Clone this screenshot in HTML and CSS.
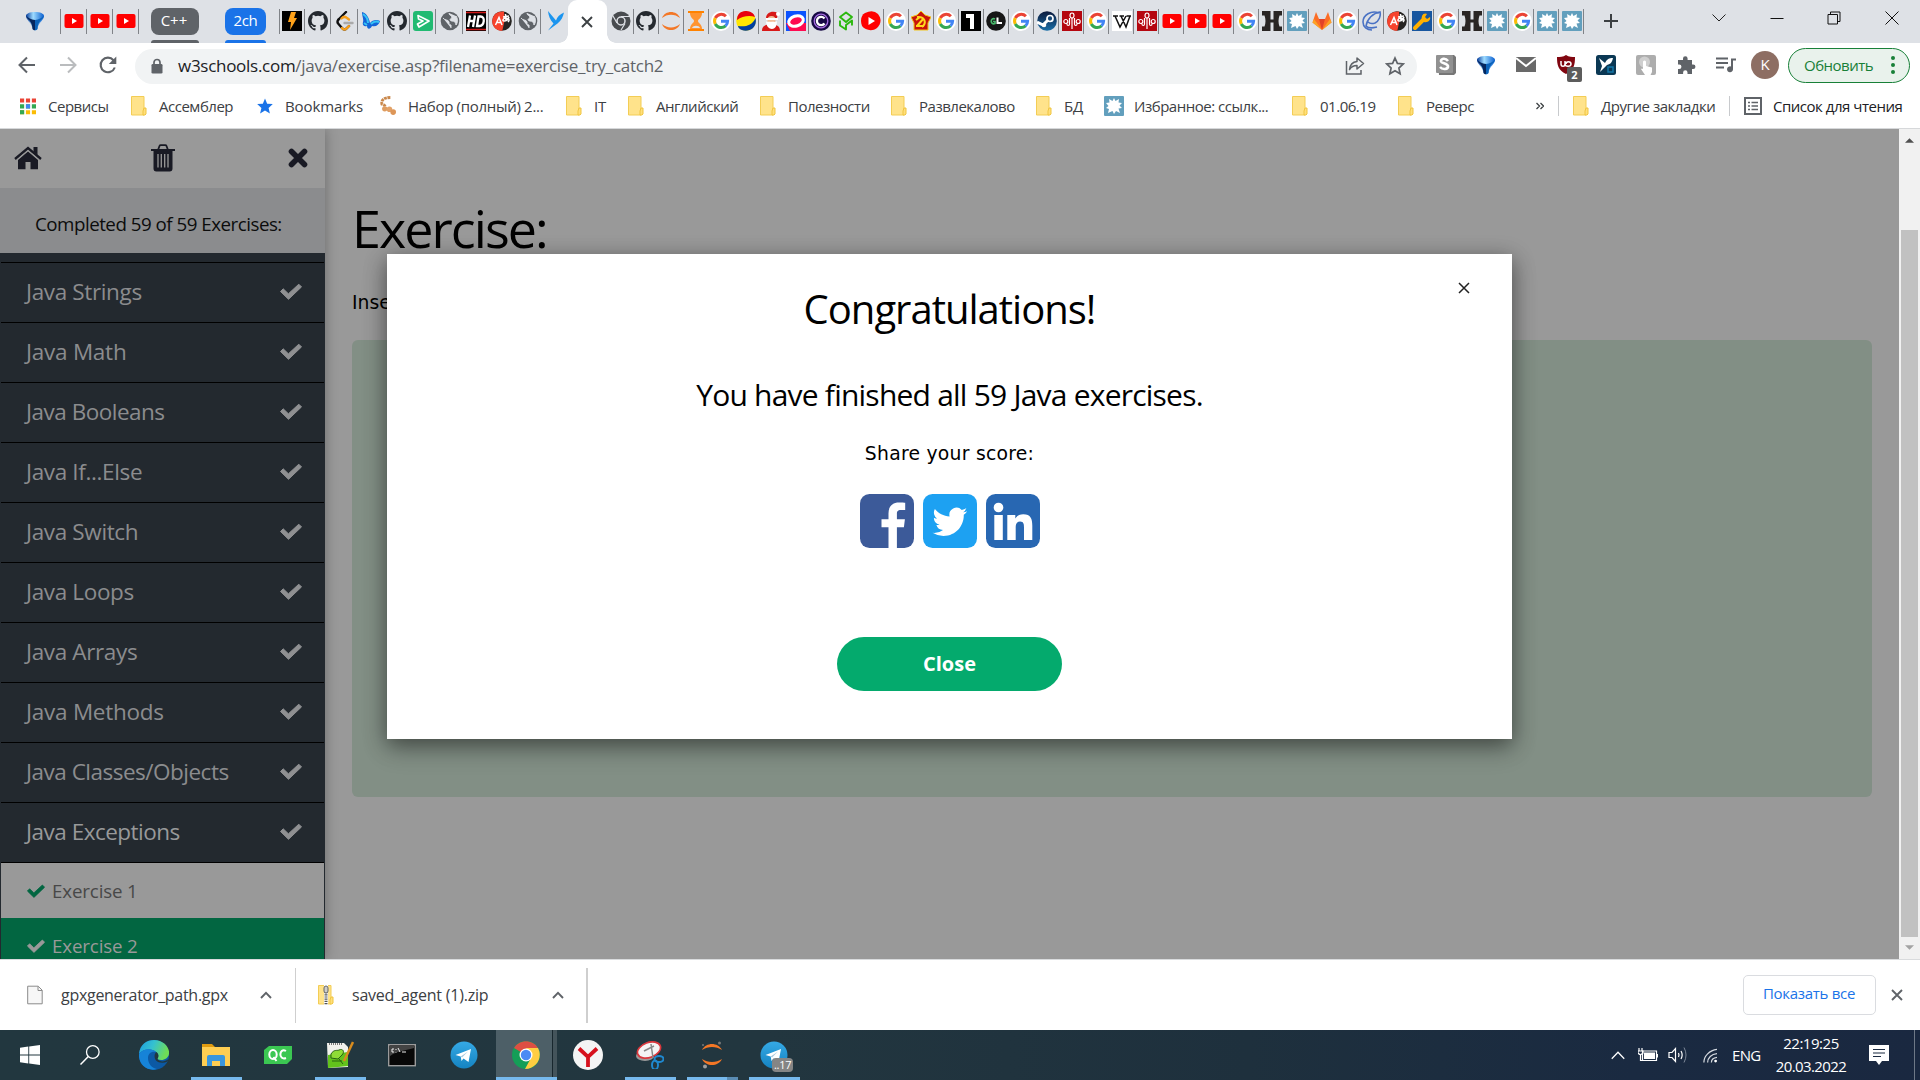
FILE: index.html
```html
<!DOCTYPE html>
<html lang="ru">
<head>
<meta charset="utf-8">
<title>Exercise</title>
<link rel="stylesheet" href="styles.css">
</head>
<body>
<svg class="defs" aria-hidden="true">
  <defs>
    <linearGradient id="blueDrop" x1="0" x2="1"><stop offset="0" stop-color="#063c9c"/><stop offset=".4" stop-color="#9fdcff"/><stop offset="1" stop-color="#0a5fd0"/></linearGradient>
    <linearGradient id="edgeTop" x1="0" y1="0" x2="1" y2=".3"><stop offset="0" stop-color="#1b9de2"/><stop offset=".5" stop-color="#35c1d0"/><stop offset="1" stop-color="#6fdd56"/></linearGradient>
    <linearGradient id="tg" x2="0" y2="1"><stop offset="0" stop-color="#35a9e5"/><stop offset="1" stop-color="#1583c1"/></linearGradient>
    <linearGradient id="steamBg" x2="0" y2="1"><stop offset="0" stop-color="#0d1a3c"/><stop offset="1" stop-color="#1a6fa8"/></linearGradient>
    <symbol id="drop" viewBox="0 0 20 20"><path d="M10 1C5 1 1 2.500 1 5c0 4 5.500 6 6.500 13 1 1.700 4 1.700 5 0C13.500 11 19 9 19 5c0-2.500-4-4-9-4z" fill="url(#blueDrop)"/><path d="M1.200 4.500C2 9 7 9 7.500 18c.5 1 1.500 1.300 2.500 1.300V9C6 8.500 3 7 1.200 4.500z" fill="#04265e"/><path d="M10 9c4-.5 7-2 8.800-4.500C18 9 13 9 12.500 18c-.5 1-1.500 1.300-2.500 1.300z" fill="#0b62b8"/></symbol>
    <symbol id="yt" viewBox="0 0 20 20"><rect x=".5" y="3" width="19" height="14" rx="2" fill="#f00"/><path d="M8 7l5 3-5 3z" fill="#fff"/></symbol>
    <symbol id="bolt" viewBox="0 0 20 20"><path fill="#000" d="M0 0h20v20H0z"/><path d="M9 1h5l-2 6h3L8 19l1-8H6z" fill="#ffa21a"/></symbol>
    <symbol id="gh" viewBox="0 0 16 16"><path fill="#24292f" d="M8 0C3.58 0 0 3.58 0 8c0 3.54 2.29 6.53 5.47 7.59.4.07.55-.17.55-.38 0-.19-.01-.82-.01-1.49-2.01.37-2.53-.49-2.69-.94-.09-.23-.48-.94-.82-1.13-.28-.15-.68-.52-.01-.53.63-.01 1.08.58 1.23.82.72 1.21 1.87.87 2.33.66.07-.52.28-.87.51-1.07-1.78-.2-3.64-.89-3.64-3.95 0-.87.31-1.59.82-2.15-.08-.2-.36-1.02.08-2.12 0 0 .67-.21 2.2.82a7.6 7.6 0 014 0c1.53-1.04 2.2-.82 2.2-.82.44 1.1.16 1.92.08 2.12.51.56.82 1.27.82 2.15 0 3.07-1.87 3.75-3.65 3.95.29.25.54.73.54 1.48 0 1.07-.01 1.93-.01 2.2 0 .21.15.46.55.38A8.01 8.01 0 0016 8c0-4.42-3.58-8-8-8z"/></symbol>
    <symbol id="leet" viewBox="0 0 20 20"><g fill="none" stroke-width="2.4" stroke-linecap="round"><path d="M11 1L3.500 8.500" stroke="#111"/><path d="M3.500 8.500q-2 2.500 0 4.500l3.500 4q2.500 3 5 0l2-2" stroke="#111"/><path d="M7 17q2.500 3 5 0l2-2M6.500 7.500q3-3 5.500-.5l2 1.500" stroke="#f9a01b"/><path d="M9.500 12h8" stroke="#aaa"/></g></symbol>
    <symbol id="butterfly" viewBox="0 0 20 20"><path d="M1 1c4 1 7 5 8 11 2-3 7-4 10-2-1 4-4 6-8 5-2 4-5 3-5 0-3 1-5-1-4-4C3 9 1 5 1 1z" fill="#1464d8"/><path d="M2 3c3 2 5 5 5 9M10 13c2-2 5-3 8-2M3 12l3 2" stroke="#35c4f5" stroke-width="2" fill="none"/></symbol>
    <symbol id="greenplay" viewBox="0 0 20 20"><rect width="20" height="20" rx="3" fill="#21ba72"/><path d="M5 4.500L16 10 6 16l-1.500-3L10 10 5.500 8z" fill="none" stroke="#fff" stroke-width="1.700" stroke-linejoin="round"/></symbol>
    <symbol id="globe" viewBox="0 0 20 20"><circle cx="10" cy="10" r="9.300" fill="#5f6368"/><path d="M3 7c2 3 5 1 6 4 0 2 0 3 2 3v3M9 2c0 3 3 2 3 5-3 1-2 3 0 3s4 1 4 4c2-3 2-6 0-9" fill="#dee1e6" stroke="#dee1e6"/></symbol>
    <symbol id="hd" viewBox="0 0 20 20"><path d="M0 0h20v20H0z"/><path d="M0 1.500h20M0 18.500h20" stroke="#d01818" stroke-width="1.400"/><g stroke="#fff" stroke-width="2.300" fill="none"><path d="M4 4.500L2 16M9 4.500L7 16M3 10h5M12.500 5.500L11 15h2.500c5-.5 6-9.500 1-9.500z"/></g></symbol>
    <symbol id="trans" viewBox="0 0 20 20"><circle cx="10" cy="10" r="9.800" fill="#262422"/><path d="M12 .4C3 0-.5 6 .3 12c1 5 5 8 10 7.800L12.500 10z" fill="#f7432d"/><path d="M3.500 14L7 6.500l3 7.500M5 11.500h4M11 6l6-1M13.500 3l.5 7M17 6c-1 3-3 4-5 4s-1-3 2-3 4 2 2 4" stroke="#fff" stroke-width="1.500" fill="none"/></symbol>
    <symbol id="bird" viewBox="0 0 20 20"><path d="M3 0l8 9.500C12 6 15 3 19 1.500c-1 4-2.500 8-6.500 11L3 19.500l5.500-7C5 9 3.500 5 3 0z" fill="#1c95ef"/></symbol>
    <symbol id="chromeGrey" viewBox="0 0 20 20"><circle cx="10" cy="10" r="9.500" fill="#484b4f"/><circle cx="10" cy="10" r="4" fill="#484b4f" stroke="#dee1e6" stroke-width="1.500"/><path d="M10 5.500h9M6 12L2 5M14 12.500L10 19" stroke="#dee1e6" stroke-width="1.200"/></symbol>
    <symbol id="jup" viewBox="0 0 20 20"><path d="M1 7C4-1 16-1 19 7 14 2.500 6 2.500 1 7zM1 13c3 8 15 8 18 0-5 4.500-13 4.500-18 0z" fill="#f37726"/></symbol>
    <symbol id="hour" viewBox="0 0 20 20"><path d="M2 0h16v2H2zM2 18h16v2H2z" fill="#ff8200"/><path d="M4 2c0 5 4 6 4 8s-4 3-4 8h12c0-5-4-6-4-8s4-3 4-8z" fill="#ff9430"/><path d="M6 17c1-3 7-3 8 0z" fill="#dee1e6"/></symbol>
    <symbol id="goog" viewBox="0 0 20 20"><circle cx="10" cy="10" r="10" fill="#fff"/><g fill="none" stroke-width="3"><path d="M14.900 5.300A6.600 6.600 0 004.300 7" stroke="#ea4335"/><path d="M4.300 7a6.600 6.600 0 000 6" stroke="#fbbc05"/><path d="M4.300 13a6.600 6.600 0 0010.300 1.900" stroke="#34a853"/><path d="M14.500 14.900A6.600 6.600 0 0016.600 10.200H10" stroke="#4285f4"/></g></symbol>
    <symbol id="ball" viewBox="0 0 20 20"><circle cx="10" cy="10" r="9.800" fill="#ffe600"/><path d="M1 9C1-3 17-2 19 6 14 4 6 5 1 9z" fill="#e8000e"/><path d="M19.500 7c2 8-4 13-10 12.800C4 19.500 2 16 2 15c7 1 14 0 17.500-8z" fill="#003f9e"/></symbol>
    <symbol id="santa" viewBox="0 0 20 20"><path d="M1 20c0-5 4-7 9-7s9 2 9 7z" fill="#d81818"/><path d="M5 7c0-5 6-8 12-5l-1 5z" fill="#d81818"/><circle cx="10.500" cy="9" r="4" fill="#f2bd98"/><path d="M5 7h12v2H5zM5 10c1 2 3 0 5 1 2-1 4 1 6-1 0 5-2 8-5 8s-6-3-6-8z" fill="#fff"/><circle cx="17" cy="3" r="2" fill="#fff"/></symbol>
    <symbol id="ring" viewBox="0 0 20 20"><path d="M0 0h20v12L8 20H0z" fill="#0b52ff"/><path d="M0 12h20v8H4z" fill="#ff0a50"/><ellipse cx="10" cy="10" rx="7.500" ry="5" fill="#ff0a50" stroke="#fff" stroke-width="3" transform="rotate(-18 10 10)"/></symbol>
    <symbol id="cring" viewBox="0 0 20 20"><circle cx="10" cy="10" r="9.800" fill="#180a45"/><circle cx="10" cy="10" r="6.800" fill="none" stroke="#a56be0" stroke-width="1.300"/><path d="M13.500 7.500a4.200 4.200 0 100 5" fill="none" stroke="#fff" stroke-width="2.300"/></symbol>
    <symbol id="hex" viewBox="0 0 20 20"><path d="M10 1.500l6 4.500-6 5-6-5zM4 9.500v5l6 4V14l6-4.500v5" fill="none" stroke="#2bb80e" stroke-width="1.900" stroke-linejoin="round"/></symbol>
    <symbol id="ytm" viewBox="0 0 20 20"><path d="M4 2q8-4 13 1c4 5 3 10-1 14-5 4-12 2-15-2C-1 10 0 4 4 2z" fill="#f00"/><path d="M7.500 6l6.500 4-6.500 4z" fill="#fff"/></symbol>
    <symbol id="ussr" viewBox="0 0 20 20"><path d="M10 0l4 4 6 2-3 6v7H3v-7L0 6l6-2z" fill="#c8130b" stroke="#f2c618"/><path d="M6 6c8-1 10 6 5 10M6 15l7-8M5 9l4-3M5 15h8" stroke="#ffd91c" stroke-width="2" fill="none"/></symbol>
    <symbol id="one" viewBox="0 0 20 20"><path d="M0 0h20v20H0z"/><path d="M5 3h8v15H9V7H5z" fill="#fff"/></symbol>
    <symbol id="cl" viewBox="0 0 20 20"><circle cx="10" cy="10" r="9.800" fill="#161616"/><path d="M9 8C4 6 4 14.500 9 12.500V10.500H7" stroke="#48b96b" stroke-width="1.700" fill="none"/><path d="M11.500 6.500V12H16" stroke="#fff" stroke-width="2" fill="none"/></symbol>
    <symbol id="steam" viewBox="0 0 20 20"><circle cx="10" cy="10" r="9.800" fill="url(#steamBg)"/><path d="M0 11l6 3 6-6" stroke="#fff" stroke-width="3" fill="none"/><circle cx="13" cy="7.500" r="3" fill="#184a78" stroke="#fff" stroke-width="1.700"/><circle cx="7" cy="14" r="2.300" fill="#fff"/></symbol>
    <symbol id="red" viewBox="0 0 20 20"><path fill="#b5070f" d="M0 0h20v20H0z"/><g fill="none" stroke="#fff" stroke-width="1.200"><ellipse cx="10" cy="4.500" rx="2" ry="2.500"/><circle cx="3.800" cy="10.500" r="2"/><circle cx="16.200" cy="10.500" r="2"/><path d="M10 7v11M7.500 7v6c0 2-2.500 2-2.500 0M12.500 7v6c0 2 2.500 2 2.500 0"/></g></symbol>
    <symbol id="wiki" viewBox="0 0 20 20"><path fill="#fff" d="M0 0h20v20H0z"/><path d="M1 5h5M7.500 5h4.500M14.500 5H19M3 5l5 11 6-11M9 5l5 11L18 5" fill="none" stroke="#111" stroke-width="1.500"/></symbol>
    <symbol id="hh" viewBox="0 0 20 20"><path d="M0 0h8.500v8.500h3V0H20v4.500h-2.500q-2 5.500 0 11H20V20h-8.500v-8.500h-3V20H0v-4.500h2.500q2-5.500 0-11H0z" fill="#292524"/></symbol>
    <symbol id="splat" viewBox="0 0 20 20"><rect width="20" height="20" rx="1" fill="#629fbd"/><path d="M10 2l1.500 3L15 3l-.5 3.500L18 7l-2.500 2.500L18 12l-3.500.5L16 17l-4-2-2 3-1.500-3L4 17l1-4-3-1 2.500-2L2 7l3.500-.5L5 3l3.500 2z" fill="#fff"/></symbol>
    <symbol id="gitlab" viewBox="0 0 20 20"><path d="M10 19L.5 11.500 4 1l3 7h6l3-7 3.500 10.500z" fill="#fc6d26"/><path d="M10 19L7 8h6z" fill="#e24329"/><path d="M10 19L.5 11.500 2 8z" fill="#fca326"/><path d="M10 19l9.500-7.500L18 8z" fill="#fca326"/></symbol>
    <symbol id="pen" viewBox="0 0 20 20"><path d="M17 2C9-1 1 4 1 11c0 5 4 8 9 8M4 15C5 8 11 2 18 1c1 4-1 9-5 11-3 1-5 1-7-1M4 15c3 3 7 2 11 1" fill="none" stroke="#4a72c4" stroke-width="1.600"/></symbol>
    <symbol id="wrench" viewBox="0 0 20 20"><path fill="#17569f" d="M0 0h20v20H0z"/><path d="M3 17l8-8" stroke="#ffb000" stroke-width="4" stroke-linecap="round"/><path d="M10 5c1-3 4-3 5-2l-2 3 2 2 3-2c1 3-2 6-6 5-2-1-3-3-2-6z" fill="#ffb000"/></symbol>
    <symbol id="folder" viewBox="0 0 16 20"><path d="M.5.500h12.500V19H.5z" fill="#ffe38b" stroke="#f3cd55"/><path d="M13 12h2v6l-1 1h-2v-4z" fill="#ffdf7c" stroke="#f0c540"/></symbol>
    <symbol id="check" viewBox="0 0 22 17"><path d="M3.200 5.800l5.200 5L18.800 1.200l2.700 2.700L8.500 16.300 0.500 8.500z" fill="currentColor" stroke="currentColor" stroke-linejoin="round"/></symbol>
    <symbol id="x" viewBox="0 0 12 12"><path d="M1 1l10 10M11 1L1 11" stroke="currentColor" fill="none" stroke-width="var(--sw,1.900)"/></symbol>
    <symbol id="up" viewBox="0 0 12 8"><path d="M1 7l5-5.200L11 7" stroke="currentColor" fill="none" stroke-width="var(--sw,1.900)"/></symbol>
    <symbol id="plane" viewBox="0 0 28 28"><circle cx="14" cy="14" r="13.500" fill="url(#tg)"/><path d="M5.500 14L21 8l-2.500 13-5-3.500-2 2.500-.8-4.500z" fill="#fff"/><path d="M10.700 15.500L18 10.500l-6 6z" fill="#a9c9dd"/></symbol>
  </defs>
</svg>

<header class="tabs">
  <div class="slot first"><svg><use href="#drop"/></svg></div>
  <div class="slot wide"><svg><use href="#yt"/></svg></div>
  <div class="slot wide"><svg><use href="#yt"/></svg></div>
  <div class="slot wide"><svg><use href="#yt"/></svg></div>
  <div class="group grey">C++</div>
  <div class="group blue">2ch</div>
  <div class="strip strip-left">
    <div class="slot"><svg><use href="#bolt"/></svg></div>
    <div class="slot"><svg><use href="#gh"/></svg></div>
    <div class="slot"><svg><use href="#leet"/></svg></div>
    <div class="slot"><svg><use href="#butterfly"/></svg></div>
    <div class="slot"><svg><use href="#gh"/></svg></div>
    <div class="slot"><svg><use href="#greenplay"/></svg></div>
    <div class="slot"><svg><use href="#globe"/></svg></div>
    <div class="slot"><svg><use href="#hd"/></svg></div>
    <div class="slot"><svg><use href="#trans"/></svg></div>
    <div class="slot"><svg><use href="#globe"/></svg></div>
    <div class="slot"><svg><use href="#bird"/></svg></div>
  </div>
  <div class="active-tab"><svg><use href="#x"/></svg></div>
  <div class="strip strip-right">
    <div class="slot"><svg><use href="#chromeGrey"/></svg></div>
    <div class="slot"><svg><use href="#gh"/></svg></div>
    <div class="slot"><svg><use href="#jup"/></svg></div>
    <div class="slot"><svg><use href="#hour"/></svg></div>
    <div class="slot"><svg><use href="#goog"/></svg></div>
    <div class="slot"><svg><use href="#ball"/></svg></div>
    <div class="slot"><svg><use href="#santa"/></svg></div>
    <div class="slot"><svg><use href="#ring"/></svg></div>
    <div class="slot"><svg><use href="#cring"/></svg></div>
    <div class="slot"><svg><use href="#hex"/></svg></div>
    <div class="slot"><svg><use href="#ytm"/></svg></div>
    <div class="slot"><svg><use href="#goog"/></svg></div>
    <div class="slot"><svg><use href="#ussr"/></svg></div>
    <div class="slot"><svg><use href="#goog"/></svg></div>
    <div class="slot"><svg><use href="#one"/></svg></div>
    <div class="slot"><svg><use href="#cl"/></svg></div>
    <div class="slot"><svg><use href="#goog"/></svg></div>
    <div class="slot"><svg><use href="#steam"/></svg></div>
    <div class="slot"><svg><use href="#red"/></svg></div>
    <div class="slot"><svg><use href="#goog"/></svg></div>
    <div class="slot"><svg><use href="#wiki"/></svg></div>
    <div class="slot"><svg><use href="#red"/></svg></div>
    <div class="slot"><svg><use href="#yt"/></svg></div>
    <div class="slot"><svg><use href="#yt"/></svg></div>
    <div class="slot"><svg><use href="#yt"/></svg></div>
    <div class="slot"><svg><use href="#goog"/></svg></div>
    <div class="slot"><svg><use href="#hh"/></svg></div>
    <div class="slot"><svg><use href="#splat"/></svg></div>
    <div class="slot"><svg><use href="#gitlab"/></svg></div>
    <div class="slot"><svg><use href="#goog"/></svg></div>
    <div class="slot"><svg><use href="#pen"/></svg></div>
    <div class="slot"><svg><use href="#trans"/></svg></div>
    <div class="slot"><svg><use href="#wrench"/></svg></div>
    <div class="slot"><svg><use href="#goog"/></svg></div>
    <div class="slot"><svg><use href="#hh"/></svg></div>
    <div class="slot"><svg><use href="#splat"/></svg></div>
    <div class="slot"><svg><use href="#goog"/></svg></div>
    <div class="slot"><svg><use href="#splat"/></svg></div>
    <div class="slot"><svg><use href="#splat"/></svg></div>
  </div>
  <svg class="plus" viewBox="0 0 16 16"><path d="M8 1v14M1 8h14" stroke="#3c4043" stroke-width="2"/></svg>
  <div class="window-buttons">
    <svg viewBox="0 0 14 14"><path d="M.5 3.500L7 10l6.500-6.500" fill="none" stroke="#222"/></svg>
    <svg viewBox="0 0 14 14"><path d="M.5 7.500h13" stroke="#111"/></svg>
    <svg viewBox="0 0 14 14"><path d="M1 3.500h9.500V13H1zM3.500 3.500V1h9.500v9.500h-2.500" fill="none" stroke="#111"/></svg>
    <svg viewBox="0 0 14 14"><path d="M.5.500l13 13M13.500.500l-13 13" stroke="#111"/></svg>
  </div>
</header>

<div class="toolbar">
  <div class="nav">
    <svg viewBox="0 0 20 20"><path d="M10 2.500L2.500 10l7.500 7.500M3 10h15" fill="none" stroke="#5f6368" stroke-width="2"/></svg>
    <svg viewBox="0 0 20 20"><path d="M10 2.500l7.500 7.500-7.500 7.500M17 10H2" fill="none" stroke="#babcbe" stroke-width="2"/></svg>
    <svg viewBox="0 0 20 20"><path d="M16.800 12.500A7.300 7.300 0 1115.500 5.200L17 7" fill="none" stroke="#5f6368" stroke-width="2.100"/><path d="M18.300 1.500V9h-7.500z" fill="#5f6368"/></svg>
  </div>
  <div class="omnibox">
    <svg class="lock" viewBox="0 0 12 16"><path d="M3 7V4.500a3 3 0 016 0V7" fill="none" stroke="#5f6368" stroke-width="1.700"/><rect x=".5" y="6" width="11" height="9.500" rx="1.300" fill="#5f6368"/></svg>
    <span class="url"><b>w3schools.com</b>/java/exercise.asp?filename=exercise_try_catch2</span>
    <svg class="share" viewBox="0 0 20 20"><path d="M1.500 5v13h14.500v-4" fill="none" stroke="#5f6368" stroke-width="1.500"/><path d="M12 2l6.500 5.500L12 13v-3.500c-4 0-6 1.500-7.500 4C5 9 7 6 12 5.500z" fill="none" stroke="#5f6368" stroke-width="1.500" stroke-linejoin="round"/></svg>
    <svg class="star" viewBox="0 0 20 20"><path d="M10 2l2.400 5.400 5.900.6-4.400 4 1.200 5.800L10 14.800l-5.100 3L6.100 12 1.700 8l5.900-.6z" fill="none" stroke="#5f6368" stroke-width="1.700"/></svg>
  </div>
  <div class="extensions">
    <svg viewBox="0 0 20 20"><path d="M2 2l2-2h14l2 2v16l-2 2H3z" fill="#777"/><rect width="17" height="18" rx="1" fill="#919191"/><path d="M12 6C9.500 2.500 4.500 3.500 5 6.500c.5 2 6.500 1.500 7 4.500.3 3.500-5.500 4-8 1" fill="none" stroke="#fff" stroke-width="2.600"/></svg>
    <svg viewBox="0 0 20 20"><use href="#drop"/></svg>
    <svg viewBox="0 0 20 20"><path fill="#696969" d="M0 2h20v15H0z"/><path d="M0 3l10 8 10-8" fill="none" stroke="#fff" stroke-width="2"/></svg>
    <div class="ublock"><svg viewBox="0 0 20 20"><path d="M10 0c3 2 6 2 9 2 0 8-1 13-9 17C2 15 1 10 1 2c3 0 6 0 9-2z" fill="#800610"/><path d="M5 6v3c0 3 4 3 4 0V6v3c0 3 6 3 6 0s-5-3-5 0" stroke="#fff" stroke-width="1.500" fill="none"/></svg><span>2</span></div>
    <svg viewBox="0 0 20 20"><rect width="20" height="20" rx="2.500" fill="#0b3854"/><path d="M3 3l6 5c2-4 4-5 8-5-1 4-2 6-6 7l-3 3-4 4 2-6z" fill="#fff"/><path d="M12 12h5v5h-5z" fill="none" stroke="#1477a8" stroke-width="1.500"/></svg>
    <svg viewBox="0 0 20 20"><rect width="20" height="20" rx="2" fill="#adadad"/><circle cx="8.500" cy="7" r="5.500" fill="#cfcfcf"/><path d="M7 6.500q1.500-2 3 0V11l6 1.500V17l-1.500 3H9l-4-6q1-1 2 0z" fill="#fff"/></svg>
    <svg viewBox="0 0 20 20"><path d="M2 5h5V3.500a2.300 2.300 0 014.600 0V5H16v4.500h1.200a2.200 2.200 0 010 4.500H16v5h-4.500v-1.500a2.200 2.200 0 00-4.400 0V19H2v-5h1.200a2 2 0 000-4.500H2z" fill="#5f6368"/></svg>
    <svg viewBox="0 0 20 20"><path d="M0 3.500h12M0 8h12M0 12.500h8" stroke="#5f6368" stroke-width="2"/><path d="M15 3.500h5v2h-3V14a3 3 0 11-2-2.500z" fill="#5f6368"/></svg>
  </div>
  <div class="avatar">K</div>
  <div class="update"><span>Обновить</span><svg viewBox="0 0 4 18"><g fill="#188038"><circle cx="2" cy="2" r="2"/><circle cx="2" cy="9" r="2"/><circle cx="2" cy="16" r="2"/></g></svg></div>
</div>

<nav class="bookmarks">
  <a><svg class="ic" viewBox="0 0 17 20"><g stroke-width="4.400" stroke-dasharray="4.400 1.900"><path d="M0 4.200h17" stroke="#ea4335"/><path d="M0 10.400h17" stroke="#34a853"/><path d="M0 16.600h17" stroke="#fbbc04"/></g><path d="M6.300 8.200h4.400v4.400H6.300z" fill="#4285f4"/><path d="M0 14.400h4.400v4.400H0z" fill="#34a853"/></svg><span>Сервисы</span></a>
  <a><svg class="ic"><use href="#folder"/></svg><span>Ассемблер</span></a>
  <a><svg class="ic" viewBox="0 0 17 17"><path d="M8.500.5l2.300 5.500 6 .5-4.500 4 1.400 5.900-5.200-3.100-5.200 3.100 1.400-5.900-4.500-4 6-.5z" fill="#1a73e8"/></svg><span class="loose">Bookmarks</span></a>
  <a><svg class="ic" viewBox="0 0 17 20"><path d="M11 1C4 1 1 4 2 8c4 1 4 3 3 5" stroke="#c9874a" stroke-width="3" stroke-dasharray="3 .7" fill="none"/><circle cx="5" cy="13" r="2.800" fill="#df9d60"/><circle cx="10" cy="13.500" r="3" fill="#e2a268"/><circle cx="14" cy="16.500" r="3" fill="#dd9658"/></svg><span class="medium">Набор (полный) 2...</span></a>
  <a><svg class="ic"><use href="#folder"/></svg><span class="loose">IT</span></a>
  <a><svg class="ic"><use href="#folder"/></svg><span>Английский</span></a>
  <a><svg class="ic"><use href="#folder"/></svg><span>Полезности</span></a>
  <a><svg class="ic"><use href="#folder"/></svg><span>Развлекалово</span></a>
  <a><svg class="ic"><use href="#folder"/></svg><span class="loose">БД</span></a>
  <a><svg class="ic big"><use href="#splat"/></svg><span>Избранное: ссылк...</span></a>
  <a><svg class="ic"><use href="#folder"/></svg><span>01.06.19</span></a>
  <a><svg class="ic"><use href="#folder"/></svg><span>Реверс</span></a>
  <a class="more"><svg viewBox="0 0 8 8"><path d="M.5 1l3 3-3 3M4.500 1l3 3-3 3" fill="none" stroke="#3c4043" stroke-width="1.300"/></svg></a>
  <a class="ruled"><svg class="ic"><use href="#folder"/></svg><span>Другие закладки</span></a>
  <a class="ruled reading"><svg class="ic list-icon" viewBox="0 0 18 18"><path d="M1 1h16v16H1z" fill="none" stroke="#5f6368" stroke-width="2"/><path d="M4 5.500h2M4 9h2M4 12.500h2M7.500 5.500H14M7.500 9H14M7.500 12.500H14" stroke="#5f6368" stroke-width="1.600"/></svg><span>Список для чтения</span></a>
</nav>

<main class="page">
  <aside class="sidebar">
    <div class="side-icons">
      <svg class="home" viewBox="0 0 28 24"><path d="M14 5.500L4 14v9.300h7.500V16h5v7.300H24V14z" fill="currentColor"/><path d="M1 13L14 2l13 11" fill="none" stroke="currentColor" stroke-width="2.300"/><path d="M14 4.500L3 13.800M14 4.500l11 9.300" fill="none" stroke="#999"/><path d="M19.500 1h4v8l-4-3.500z" fill="currentColor"/></svg>
      <svg class="trash" viewBox="0 0 24 28"><path d="M0 6h24" stroke="currentColor" stroke-width="2"/><path d="M7 6l1.500-4q.3-.8 1.300-.8h4.400q1 0 1.300.8L17 6" fill="none" stroke="currentColor" stroke-width="1.800"/><path d="M2.500 6h19v18.500q0 3-2.800 3H5.300q-2.800 0-2.800-3z" fill="currentColor"/><path d="M7 10v13.500M10.300 10v13.500M13.700 10v13.500M17 10v13.500" stroke="#999" stroke-width="1.300"/></svg>
      <svg class="cross" viewBox="0 0 20 22"><path d="M3.500 4.500l13 13M16.500 4.500l-13 13" stroke="currentColor" stroke-width="5.600" stroke-linecap="round"/></svg>
    </div>
    <div class="done">Completed 59 of 59 Exercises:</div>
    <div class="topics">
      <div class="topic"><span>Java Strings</span><svg><use href="#check"/></svg></div>
      <div class="topic"><span class="loose">Java Math</span><svg><use href="#check"/></svg></div>
      <div class="topic"><span class="tight">Java Booleans</span><svg><use href="#check"/></svg></div>
      <div class="topic"><span>Java If...Else</span><svg><use href="#check"/></svg></div>
      <div class="topic"><span>Java Switch</span><svg><use href="#check"/></svg></div>
      <div class="topic"><span>Java Loops</span><svg><use href="#check"/></svg></div>
      <div class="topic"><span>Java Arrays</span><svg><use href="#check"/></svg></div>
      <div class="topic"><span class="loose">Java Methods</span><svg><use href="#check"/></svg></div>
      <div class="topic"><span class="tight">Java Classes/Objects</span><svg><use href="#check"/></svg></div>
      <div class="topic open"><span class="tight">Java Exceptions</span><svg><use href="#check"/></svg></div>
      <div class="sub"><svg><use href="#check"/></svg>Exercise 1</div>
      <div class="sub current"><svg><use href="#check"/></svg>Exercise 2</div>
    </div>
  </aside>
  <section class="content">
    <h1>Exercise:</h1>
    <p>Insert</p>
    <div class="exercise"></div>
  </section>
  <div class="scrollbar">
    <svg viewBox="0 0 10 5"><path d="M0 5l5-5 5 5z" fill="#505050"/></svg>
    <div class="thumb"></div>
    <svg viewBox="0 0 10 5"><path d="M0 0l5 5 5-5z" fill="#a3a3a3"/></svg>
  </div>
  <div class="modal">
    <svg class="modal-x"><use href="#x"/></svg>
    <h2>Congratulations!</h2>
    <h3>You have finished all 59 Java exercises.</h3>
    <p>Share your score:</p>
    <div class="share-row">
      <svg viewBox="0 0 54 54"><rect width="54" height="54" rx="9.500" fill="#3c5a99"/><path d="M28.500 54V33.300h-7v-8.100h7v-6c0-7 4.200-10.700 10.400-10.700 3 0 5.500.2 6.300.3v7.300h-4.300c-3.400 0-4 1.600-4 3.900v5.200h8l-1 8.100h-7V54z" fill="#fff"/></svg>
      <svg viewBox="0 0 54 54"><rect width="54" height="54" rx="9.500" fill="#1da1f2"/><path transform="translate(9.500 10.500) scale(1.450)" d="M23.950 4.570a10 10 0 01-2.820.77 4.960 4.960 0 002.160-2.720c-.95.550-2 .96-3.130 1.180a4.920 4.920 0 00-8.380 4.480C7.690 8.090 4.070 6.130 1.640 3.160a4.920 4.920 0 001.520 6.570 4.900 4.900 0 01-2.230-.61v.06a4.920 4.920 0 003.950 4.830 5 5 0 01-2.210.08 4.940 4.940 0 004.600 3.420A9.870 9.870 0 010 19.540a13.990 13.990 0 007.550 2.210c9.140 0 14.300-7.720 14.010-14.640a9.940 9.940 0 002.390-2.540z" fill="#fff"/></svg>
      <svg viewBox="0 0 54 54"><rect width="54" height="54" rx="9.500" fill="#2867b2"/><circle cx="12.500" cy="13.500" r="4.800" fill="#fff"/><path d="M8.300 21h8.500v25H8.300zM21.300 21h8v3.500c1.500-2.700 4.500-4.200 8-4.200 7.500 0 9 4.700 9 11.500V46H38V33.500c0-3-.2-6-3.900-6-3.800 0-4.400 3-4.400 5.800V46h-8.400z" fill="#fff"/></svg>
    </div>
    <div class="close-btn">Close</div>
  </div>
</main>

<footer class="downloads">
  <div class="item one">
    <svg class="file" viewBox="0 0 16 19"><path d="M.7.700h10.500l4 4v13.600H.7z" fill="#f7f7f7" stroke="#8b8b8b"/><path d="M11 1v4h4" fill="none" stroke="#8b8b8b"/></svg>
    <span>gpxgenerator_path.gpx</span><svg class="caret"><use href="#up"/></svg>
  </div>
  <div class="item two">
    <svg class="file" viewBox="0 0 16 20"><use href="#folder"/><path d="M8 0v20" stroke="#fff" stroke-width="4"/><path d="M8 7v13" stroke="#555" stroke-width="3" stroke-dasharray="1.200 1"/><rect x="6" y="1" width="4" height="7" rx="2" fill="#ccc" stroke="#666"/></svg>
    <span>saved_agent (1).zip</span><svg class="caret"><use href="#up"/></svg>
  </div>
  <div class="show-all">Показать все</div>
  <svg class="dl-x"><use href="#x"/></svg>
</footer>

<footer class="taskbar">
  <div class="task narrow"><svg class="s20" viewBox="0 0 20 20"><path d="M0 2.800l8.300-1.200v8H0zM9.200 1.500L20 0v9.600H9.200zM0 10.400h8.300v8L0 17.200zM9.200 10.400H20V20L9.200 18.500z" fill="#fff"/></svg></div>
  <div class="task narrow search"><svg class="s20" viewBox="0 0 20 20"><circle cx="12.800" cy="7" r="6.300" fill="none" stroke="#fff" stroke-width="1.300"/><path d="M8.300 11.500L.5 19.500" stroke="#fff" stroke-width="1.500"/></svg></div>
  <div class="task"><svg class="s30" viewBox="0 0 30 30"><circle cx="15" cy="15" r="15" fill="#0c59a4"/><path d="M0 14C1 4 8 0 15 0c10 0 16 8 15 14-1 5-6 7-11 5.500-2-1 1-2 0-5C17 9 5 7 0 14z" fill="url(#edgeTop)"/><path d="M0 14c4-6 13-6 17-2-5-1-8 2-8 6 0 6 4 10 9 11C8 32-1 24 0 14z" fill="#1683d8"/><path d="M17.500 12c3 3 2 5 1 7 2 3 7 3.500 11 0l-1 2.500c-4 2-9 1.500-11.500-1-2-3-2-6.500.5-8.500z" fill="#22373f"/></svg></div>
  <div class="task run"><svg class="s28" viewBox="0 0 28 24"><path d="M0 1h10l3 3H0z" fill="#e09b10"/><path d="M0 4h28v19H0z" fill="#ffce52"/><path d="M5 23V14q0-2 2-2h14q2 0 2 2v9h-5v-5h-8v5z" fill="#3a96dd"/></svg></div>
  <div class="task"><svg class="s28" viewBox="0 0 28 24"><path d="M0 7l5-4h23v13l-5 5H0z" fill="#3bc752"/><g fill="none" stroke="#fff" stroke-width="2"><ellipse cx="9" cy="11.500" rx="3.700" ry="4.500"/><path d="M9.500 14l3 4M22 8c-7-4-8 10 0 7"/></g></svg></div>
  <div class="task run"><svg class="s28" viewBox="0 0 28 28"><path d="M1 2h17l4 4v20L2 27z" fill="#f1f1ec"/><path d="M2 14l20-3v14l-20 2z" fill="#62c21c"/><path d="M5 13c3-5 6-3 8-4 4-2 6 2 3 5l-4 4-7-1zM6 20h10M13 18l4 5" fill="#8fdc36" stroke="#286212"/><path d="M18 20L27 1" stroke="#d78b1e" stroke-width="2.500"/><path d="M3 3h13" stroke="#777" stroke-width="2" stroke-dasharray="1 1"/></svg></div>
  <div class="task"><svg class="s28" viewBox="0 0 28 24"><rect x=".7" y="1.700" width="26.600" height="21" fill="#080808" stroke="#9b9b9b" stroke-width="1.400"/><path d="M2 13C9 8 16 8 26 5V3H2z" fill="#444"/><path d="M6 6H4v3h2M8 6v1M8 9v.5M10 5l2 4M14 9h4" stroke="#eee" fill="none"/></svg></div>
  <div class="task"><svg class="s28"><use href="#plane"/></svg></div>
  <div class="task run focus"><svg class="s28" viewBox="0 0 28 28"><circle cx="14" cy="14" r="14" fill="#149e57"/><path d="M14 14L2 7C7-2 21-2 26 7z" fill="#dd4f43"/><path d="M26 7c5 9-1 21-13 21l6.500-12L14 7z" fill="#ffcd41"/><circle cx="14" cy="14" r="6.500" fill="#fff"/><circle cx="14" cy="14" r="5.200" fill="#4a8af4"/></svg></div>
  <div class="task"><svg class="s30" viewBox="0 0 30 30"><circle cx="15" cy="15" r="15" fill="#f4f4f4"/><path d="M6 8.500l9 8.500 9-8.500M15 16v11" fill="none" stroke="#d6101c" stroke-width="3.800"/></svg></div>
  <div class="task run"><svg class="s28" viewBox="0 0 28 28"><ellipse cx="9" cy="15" rx="9" ry="5" fill="#9a9a9a"/><ellipse cx="13" cy="9" rx="12" ry="7.500" transform="rotate(-20 13 9)" fill="#f4f4f4" stroke="#d9373c" stroke-width="1.700"/><path d="M8 10l10-5M15 3l2 14" stroke="#888" stroke-width="1.500"/><g fill="none" stroke="#1f88cf" stroke-width="2"><ellipse cx="23" cy="18" rx="4.500" ry="3"/><ellipse cx="19" cy="24" rx="3" ry="4.500"/></g></svg></div>
  <div class="task run split"><svg class="s28" viewBox="0 0 28 28"><path d="M4 9C8 1 20 1 24 9 18 5 10 5 4 9zM4 18c4 8 16 8 20 0-6 4-14 4-20 0z" fill="#f37726"/><circle cx="21.500" cy="2" r="1.500" fill="#777"/><circle cx="7" cy="25.500" r="2" fill="#9e9e9e"/><circle cx="5" cy="4" r="1" fill="#777"/></svg></div>
  <div class="task run badge"><svg class="s28"><use href="#plane"/></svg><span>..17</span></div>
  <div class="tray">
    <svg class="caret"><use href="#up"/></svg>
    <svg class="bat" viewBox="0 0 20 14"><path d="M4.500 3h14v9.500h-14z" fill="none" stroke="#fff" stroke-width="1.200"/><path d="M6 4.500h11v6.500H6zM18.500 6H20v3.500h-1.500z" fill="#fff"/><path d="M1 0v2.500M4 0v2.500M0 3h5v2q-2.500 3-5 0zM2.500 6v6.500h2" stroke="#fff" fill="none" stroke-width="1.200"/></svg>
    <svg class="snd" viewBox="0 0 20 18"><path d="M1 6.500h3L7.500 2.500v13L4 11.500H1z" fill="none" stroke="#fff" stroke-width="1.200"/><path d="M10.500 7q1 2 0 4M13 5q2.300 4 0 8" fill="none" stroke="#fff" stroke-width="1.200"/><path d="M16 1.500q4 7.500 0 15" fill="none" stroke="#7c8797"/></svg>
    <svg class="wifi" viewBox="0 0 16 16"><path d="M2 16C2 9 8 3 16 2M6 16c0-5 4-9 10-9.500M10 16c0-3 2-5 6-5.500" fill="none" stroke="#d5dae0" stroke-width="1.300"/><circle cx="14.500" cy="14.500" r="1.500" fill="#fff"/></svg>
    <span class="lang">ENG</span>
    <div class="clock"><span>22:19:25</span><span class="date">20.03.2022</span></div>
    <svg class="note" viewBox="0 0 20 20"><path d="M0 0h20v16h-7l-3 4-3-4H0z" fill="#fff"/><path d="M4 4.500h12M4 8h12M4 11.500h8" stroke="#1b2a41" stroke-width="1.200"/></svg>
    <div class="peek"></div>
  </div>
</footer>
</body>
</html>
```
FILE: styles.css
```css
* { box-sizing: border-box; }
body {
  margin: 0;
  width: 1920px;
  height: 1080px;
  overflow: hidden;
  display: flex;
  flex-direction: column;
  font-family: "Open Sans", "Noto Sans", sans-serif;
  color: #3c4043;
  background: #fff;
  white-space: nowrap;
}
h1, h2, h3, p { margin: 0; font-weight: 400; }
svg { display: block; flex: none; }
.defs { position: absolute; width: 0; height: 0; }

/* tab strip */
.tabs { height: 43px; flex: none; display: flex; background: #dee1e6; }
.slot { position: relative; width: 25.03px; height: 42px; flex: none; display: flex; align-items: center; justify-content: center; }
.slot svg { width: 20px; height: 20px; }
.slot::after { content: ""; position: absolute; right: 0; top: 9px; width: 1px; height: 25px; background: #808388; }
.slot.first { width: 60.500px; padding-left: 10px; }
.slot.wide { width: 26.300px; }
.group { position: relative; height: 27px; margin-top: 8px; border-radius: 8px; color: #fff; font-size: 15px; line-height: 25px; text-align: center; }
.group::after { content: ""; position: absolute; left: 0; right: 0; top: 32px; height: 3px; border-radius: 3px 3px 0 0; background: inherit; }
.group.grey { width: 48px; margin-left: 11.600px; padding-right: 2px; background: #5f6368; }
.group.blue { width: 41px; margin-left: 26px; background: #1a73e8; letter-spacing: -.4px; }
.strip { display: flex; }
.strip-left { margin-left: 13px; position: relative; }
.strip-left::before { content: ""; position: absolute; left: 0; top: 9px; width: 1px; height: 25px; background: #808388; }
.strip-left .slot { width: 26.250px; }
.strip-left .slot:last-child::after { display: none; }
.active-tab { position: relative; width: 39px; height: 43px; margin: 0 2px 0 0; border-radius: 9px 9px 0 0; background: #fff; display: flex; align-items: center; justify-content: center; color: #3c4043; }
.active-tab::before, .active-tab::after { content: ""; position: absolute; bottom: 0; width: 9px; height: 9px; }
.active-tab::before { left: -9px; background: radial-gradient(circle at 0 0, transparent 8.500px, #fff 9px); }
.active-tab::after { right: -9px; background: radial-gradient(circle at 100% 0, transparent 8.500px, #fff 9px); }
.active-tab svg { width: 12px; height: 12px; }
.plus { width: 16px; height: 16px; margin: 13px 0 0 19px; }
.window-buttons { display: flex; gap: 43.500px; margin: 11px 0 0 93px; }
.window-buttons svg { width: 14px; height: 14px; }

/* toolbar */
.toolbar { height: 43px; flex: none; padding-top: 1px; display: flex; align-items: center; }
.nav { display: flex; gap: 20.500px; padding-left: 17px; width: 135px; flex: none; }
.nav svg { width: 20px; height: 20px; }
.omnibox { width: 1282px; height: 35px; margin-top: 2px; border-radius: 18px; background: #f1f3f4; display: flex; align-items: center; padding: 0 12px 0 16px; }
.lock { width: 12px; height: 16px; }
.url { flex: 1; padding: 0 0 2px 15px; font-size: 17px; letter-spacing: -.28px; color: #5f6368; }
.url b { font-weight: 400; color: #202124; }
.share { width: 20px; height: 20px; margin-right: 20px; }
.star { width: 20px; height: 20px; }
.extensions { display: flex; gap: 20px; padding-left: 19px; }
.extensions svg { width: 20px; height: 20px; }
.ublock { position: relative; }
.ublock span { position: absolute; left: 11px; top: 12px; width: 15px; height: 15px; border-radius: 2px; background: #5c5c5c; color: #fff; font: bold 11px/15px "Open Sans", sans-serif; text-align: center; }
.avatar { width: 28px; height: 28px; margin-left: 15px; border-radius: 50%; background: #8d6e63; color: #fff; font-size: 15px; line-height: 27px; text-align: center; }
.update { width: 122px; height: 35px; margin-left: 9px; border: 1px solid #188038; border-radius: 18px; background: #e9f2ec; color: #188038; font-size: 15px; letter-spacing: -.5px; display: flex; align-items: center; padding-left: 15px; }
.update span { width: 87px; padding-bottom: 1px; }
.update svg { width: 4px; height: 18px; }

/* bookmarks */
.bookmarks {
  height: 43px; flex: none; padding: 0 0 2px 20px; border-bottom: 1px solid #d6d8da;
  display: grid; align-items: center;
  grid-template-columns: 111px 126px 123px 186px 62px 132px 131px 145px 68px 188px 106px 136px 24px 171px 190px;
  font-size: 15px; letter-spacing: -.48px; color: #3c4043;
}
.bookmarks a { display: flex; align-items: center; }
.bookmarks span { padding-bottom: 1px; }
.bookmarks .loose { letter-spacing: -.1px; }
.bookmarks .medium { letter-spacing: -.3px; }
.bookmarks .ic { width: 16px; height: 20px; margin-right: 12px; }
.bookmarks .big { width: 20px; margin-right: 10px; }
.bookmarks .more svg { width: 8px; height: 8px; margin-left: 2px; }
.bookmarks .ruled { height: 20px; padding-left: 14px; border-left: 1px solid #c8cacd; }
.bookmarks .list-icon { width: 18px; height: 18px; margin-right: 11px; }
.bookmarks .reading { color: #202124; }

/* web page */
.page { position: relative; height: 830px; flex: none; display: flex; overflow: hidden; background: #999; }
.sidebar { position: relative; width: 325px; flex: none; box-shadow: 0 0 12px rgba(0,0,0,.3); display: flex; flex-direction: column; color: #191a24; }
.side-icons { height: 59px; flex: none; display: flex; align-items: center; justify-content: space-between; padding: 0 16px 2px 14px; }
.home { width: 28px; height: 24px; }
.trash { width: 24px; height: 28px; margin-left: -4px; }
.cross { width: 22px; height: 22px; }
.done { height: 65px; flex: none; padding: 21px 0 0 35px; background: #8b8c8e; color: #0c0c0c; font-size: 18.750px; line-height: 30px; letter-spacing: -.5px; }
.topics { flex: 1; padding: 9px 1px 0; background: #23292f; overflow: hidden; }
.topic { height: 60px; padding: 0 22px 2px 25px; display: flex; align-items: center; justify-content: space-between; color: #8b8c8e; font-size: 22.500px; letter-spacing: -.36px; border-top: 1px solid #000; }
.topic .loose { letter-spacing: -.25px; }
.topic .tight { letter-spacing: -.5px; }
.topic svg { width: 22px; height: 17px; color: #8f9092; }
.topic.open { color: #98999a; height: 61px; border-bottom: 1px solid #000; }
.sub { height: 55px; padding-left: 26px; display: flex; align-items: center; gap: 7px; background: #999; color: #484848; font-size: 18.750px; letter-spacing: -.15px; }
.sub svg { width: 18px; height: 14px; color: #026641; }
.sub.current, .sub.current svg { color: #999; }
.sub.current { background: #026641; }
.content { flex: 1; padding: 60px 27px 0; color: #000; }
.content h1 { font-size: 52px; line-height: 78px; letter-spacing: -1.950px; }
.content p { margin-top: 22px; height: 51px; font: 18.750px/28px "DejaVu Sans", sans-serif; }
.exercise { height: 457px; border-radius: 6px; background: #828f85; }
.scrollbar { width: 21px; background: #f1f1f1; display: flex; flex-direction: column; align-items: center; padding: 9px 0 9px; }
.scrollbar svg { width: 9px; height: 5px; }
.thumb { width: 17px; height: 707px; margin: 87px 0 auto; background: #c1c1c1; }

/* modal */
.modal { position: absolute; left: 387px; top: 125px; width: 1125px; height: 485px; background: #fff; color: #000; box-shadow: 0 5px 20px rgba(0,0,0,.38), 0 10px 25px rgba(0,0,0,.2); display: flex; flex-direction: column; align-items: center; }
.modal-x { position: absolute; right: 42px; top: 28px; width: 12px; height: 12px; --sw: 1.500; color: #222; }
.modal h2 { margin-top: 25px; font-size: 40px; line-height: 60px; letter-spacing: -1px; }
.modal h3 { margin-top: 33px; font-size: 30px; line-height: 45px; letter-spacing: -.78px; }
.modal p { margin-top: 23px; font: 18.750px/28px "DejaVu Sans", sans-serif; letter-spacing: .26px; }
.share-row { display: flex; gap: 9px; margin-top: 26px; }
.share-row svg { width: 54px; height: 54px; }
.close-btn { width: 225px; height: 54px; margin-top: 89px; border-radius: 27px; background: #04aa6d; color: #fff; font-size: 20px; font-weight: 700; line-height: 53px; text-align: center; }

/* downloads */
.downloads { height: 71px; flex: none; border-top: 1px solid #d9dbdd; display: flex; align-items: center; font-size: 16px; }
.item { height: 55px; padding-left: 27px; display: flex; align-items: center; border-right: 1px solid #cfcfcf; letter-spacing: -.29px; }
.item.one { width: 296px; }
.item.two { width: 292px; padding-left: 22px; border-right-width: 2px; letter-spacing: -.23px; }
.file { width: 16px; height: 20px; margin-right: 18px; }
.item span { width: 199px; }
.item.two span { width: 200px; }
.caret { width: 12px; height: 8px; color: #5f6368; }
.show-all { width: 133px; height: 40px; margin: 0 15px 0 auto; border: 1px solid #dadce0; border-radius: 5px; color: #1a73e8; font-size: 15px; line-height: 35px; letter-spacing: -.3px; padding-left: 19px; }
.dl-x { width: 12px; height: 12px; margin-right: 17px; color: #5f6368; }

/* taskbar */
.taskbar { height: 50px; flex: none; display: flex; background: linear-gradient(90deg, #22373f 0%, #22363f 40%, #1e303d 65%, #1a2a41 85%, #1a2840 100%); color: #fff; }
.task { position: relative; width: 62px; flex: none; display: flex; align-items: center; justify-content: center; }
.task.narrow { width: 60px; }
.task.search { margin-right: 3px; }
.s20 { width: 20px; height: 20px; }
.s28 { width: 28px; height: 28px; }
.s30 { width: 30px; height: 30px; }
.task.run::after { content: ""; position: absolute; left: 6px; right: 5px; bottom: 0; height: 3px; background: #76b9ed; }
.task.focus { background: linear-gradient(90deg, transparent 1px, #4d5f67 1px 57px, #18272e 57px 58px, #44545b 58px); }
.task.focus::after { left: 1px; right: 0; }
.task.split::after { background: linear-gradient(90deg, #76b9ed 40px, #5a8cb3 40px); }
.task.badge span { position: absolute; left: 29px; top: 28px; height: 14px; padding: 0 2px; border-radius: 4px; background: #858585; font-size: 11px; line-height: 14px; letter-spacing: -.3px; }
.tray { margin-left: auto; display: flex; align-items: center; }
.tray .caret { width: 16px; height: 10px; color: #fff; --sw: 1; margin-right: 12px; }
.bat { width: 20px; height: 14px; margin-right: 10px; }
.snd { width: 20px; height: 18px; margin-right: 14px; }
.wifi { width: 15px; height: 16px; margin-right: 15px; }
.lang { width: 44px; font-size: 15px; letter-spacing: -.7px; }
.clock { width: 70px; display: flex; flex-direction: column; align-items: center; font-size: 15px; line-height: 23px; letter-spacing: -.45px; }
.date { letter-spacing: -.6px; }
.note { width: 20px; height: 20px; margin: 0 25px 0 23px; }
.peek { width: 6px; height: 50px; border-left: 1px solid #6e7886; }
```
